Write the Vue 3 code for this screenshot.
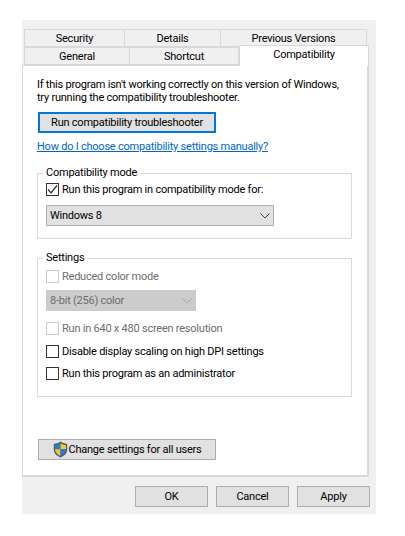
<template>
  <div class="dialog">
    <div class="tab-row">
      <div class="tab" style="width: 101px">Security</div>
      <div class="tab" style="width: 96px">Details</div>
      <div class="tab" style="width: 146px">Previous Versions</div>
    </div>
    <div class="tab-row">
      <div class="tab" style="width: 106px">General</div>
      <div class="tab" style="width: 109px">Shortcut</div>
      <div class="tab active" style="width: 130px">Compatibility</div>
    </div>

    <div class="panel">
      <p class="intro">
        If this program isn't working correctly on this version of Windows,<br />
        try running the compatibility troubleshooter.
      </p>
      <button class="btn wide focused">Run compatibility troubleshooter</button>
      <a class="help" href="#">How do I choose compatibility settings manually?</a>

      <fieldset class="group first">
        <legend>Compatibility mode</legend>
        <label class="check">
          <span class="box">
            <svg width="11" height="11" viewBox="0 0 11 11">
              <path d="M1 5.5 L4 8.8 L10 1.5" fill="none" stroke="#222" stroke-width="1.2" />
            </svg>
          </span>
          Run this program in compatibility mode for:
        </label>
        <div class="select mode">
          <span>Windows 8</span>
          <svg width="10" height="6" viewBox="0 0 10 6">
            <path d="M0.5 0.5 L5 5 L9.5 0.5" fill="none" stroke="#444" stroke-width="1" />
          </svg>
        </div>
      </fieldset>

      <fieldset class="group second">
        <legend>Settings</legend>
        <label class="check disabled">
          <span class="box"></span>
          Reduced color mode
        </label>
        <div class="select color">
          <span>8-bit (256) color</span>
          <svg width="10" height="6" viewBox="0 0 10 6">
            <path d="M0.5 0.5 L5 5 L9.5 0.5" fill="none" stroke="#a8a8a8" stroke-width="1" />
          </svg>
        </div>
        <label class="check disabled res">
          <span class="box"></span>
          Run in 640 x 480 screen resolution
        </label>
        <label class="check dpi">
          <span class="box"></span>
          Disable display scaling on high DPI settings
        </label>
        <label class="check admin">
          <span class="box"></span>
          Run this program as an administrator
        </label>
      </fieldset>

      <button class="btn wide all-users">
        <svg class="shield" width="15" height="17" viewBox="0 0 15 17">
          <path d="M7.5 0.6 C5.5 2.2 3.2 2.8 0.8 2.9 V8.5 C0.8 12.2 3.6 14.9 7.5 16.4 C11.4 14.9 14.2 12.2 14.2 8.5 V2.9 C11.8 2.8 9.5 2.2 7.5 0.6 Z" fill="#4a5a68" />
          <path d="M7.5 2.2 C6 3.3 4 3.9 2 4 V8.2 H7.5 Z" fill="#1f7fd6" />
          <path d="M7.5 2.2 C9 3.3 11 3.9 13 4 V8.2 H7.5 Z" fill="#f7c531" />
          <path d="M2 8.2 H7.5 V15 C4.4 13.7 2 11.4 2 8.2 Z" fill="#f7c531" />
          <path d="M13 8.2 H7.5 V15 C10.6 13.7 13 11.4 13 8.2 Z" fill="#1f7fd6" />
        </svg>
        Change settings for all users
      </button>
    </div>

    <div class="actions">
      <button class="btn">OK</button>
      <button class="btn">Cancel</button>
      <button class="btn">Apply</button>
    </div>
  </div>
</template>

<script setup>
</script>

<style scoped>
.dialog {
  box-sizing: border-box;
  width: 354px;
  height: 494px;
  margin: 20px 0 0 22px;
  padding-top: 9px;
  background: #f0f0f0;
  font-family: "Roboto", sans-serif;
  font-size: 11px;
  letter-spacing: -0.23px;
  color: #000;
}

.tab-row {
  display: flex;
  margin-left: 2px;
}

.tab {
  box-sizing: border-box;
  height: 18px;
  border: 1px solid #d9d9d9;
  line-height: 17px;
  text-align: center;
}

.tab + .tab {
  border-left: 0;
}

.tab.active {
  position: relative;
  z-index: 1;
  height: 21px;
  margin-top: -2px;
  margin-bottom: -1px;
  background: #fff;
  border-left: 1px solid #d9d9d9;
  border-bottom: 0;
  line-height: 17px;
}

.panel {
  box-sizing: border-box;
  display: flex;
  flex-direction: column;
  align-items: flex-start;
  width: 347px;
  height: 412px;
  padding: 12px 16px 15px 14px;
  background: #fff;
  border: 1px solid #d9d9d9;
  border-right-width: 2px;
  border-bottom-width: 2px;
}

.intro {
  margin: 0;
  line-height: 13px;
  white-space: nowrap;
}

.btn {
  box-sizing: border-box;
  width: 73px;
  height: 21px;
  padding: 0;
  background: #e1e1e1;
  border: 1px solid #adadad;
  font: inherit;
  letter-spacing: inherit;
  color: #000;
}

.btn.wide {
  width: 178px;
  margin-left: 1px;
}

.btn.focused {
  margin-top: 8px;
  border: 2px solid #0078d7;
}

.help {
  margin-top: 6px;
  line-height: 16px;
  color: #0066cc;
  text-decoration: underline;
}

.group {
  box-sizing: border-box;
  width: 315px;
  min-width: 0;
  margin: 0;
  padding: 0 8px;
  border: 1px solid #d9d9d9;
}

.group legend {
  height: 16px;
  margin-left: -3px;
  padding: 0 3px;
  line-height: 16px;
}

.group.first {
  margin-top: 10px;
  padding-top: 1px;
  padding-bottom: 12px;
}

.group.second {
  margin-top: 11px;
  padding-top: 3px;
  padding-bottom: 16px;
}

.check {
  display: flex;
  align-items: center;
  gap: 3px;
  height: 14px;
}

.check.disabled {
  color: #6d6d6d;
}

.box {
  box-sizing: border-box;
  display: flex;
  align-items: center;
  justify-content: center;
  width: 13px;
  height: 13px;
  background: #fff;
  border: 1px solid #333;
}

.check.disabled .box {
  border-color: #ccc;
}

.select {
  box-sizing: border-box;
  display: flex;
  align-items: center;
  justify-content: space-between;
  height: 21px;
  padding: 0 3px;
  border: 1px solid #adadad;
  background: #e1e1e1;
}

.select.mode {
  width: 228px;
  margin-top: 9px;
}

.select.color {
  width: 150px;
  margin-top: 7px;
  background: #ccc;
  border-color: #ccc;
  color: #6d6d6d;
}

.res {
  margin-top: 10px;
}

.dpi {
  margin-top: 9px;
}

.admin {
  margin-top: 8px;
}

.all-users {
  display: flex;
  align-items: center;
  justify-content: center;
  margin-top: auto;
}

.shield {
  margin-right: 1px;
}

.actions {
  display: flex;
  justify-content: flex-end;
  gap: 8px;
  margin-top: 9px;
  padding-right: 6px;
}
</style>
